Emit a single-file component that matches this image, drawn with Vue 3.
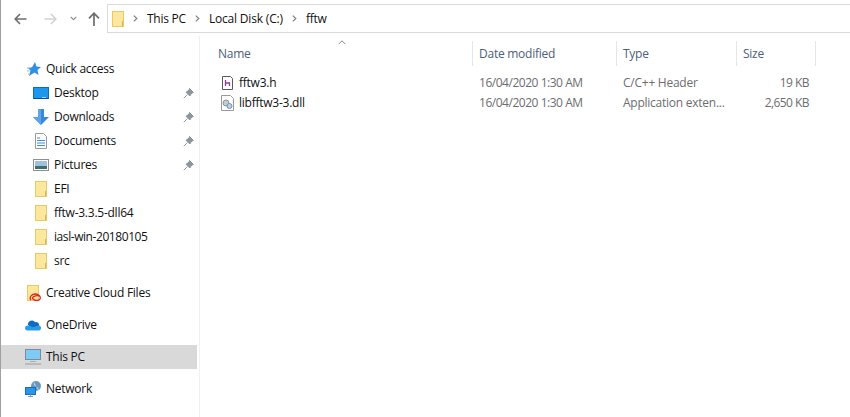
<script setup>
const folders = [
  { name: 'EFI' },
  { name: 'fftw-3.3.5-dll64' },
  { name: 'iasl-win-20180105', tight: true },
  { name: 'src' }
]
const files = [
  { name: 'fftw3.h', icon: 'h', date: '16/04/2020 1:30 AM', type: 'C/C++ Header', size: '19 KB' },
  { name: 'libfftw3-3.dll', icon: 'dll', date: '16/04/2020 1:30 AM', type: 'Application exten...', size: '2,650 KB' }
]
const quick = [
  { name: 'Desktop', icon: 'desktop' },
  { name: 'Downloads', icon: 'downloads' },
  { name: 'Documents', icon: 'documents' },
  { name: 'Pictures', icon: 'pictures' }
]
</script>

<template>
  <div class="win">
    <header class="toolbar">
      <svg class="nav back" width="13" height="12" viewBox="0 0 13 12"><path d="M6 1 1.200 6 6 11M1.500 6H12.500" fill="none" stroke="#6d6d6d" stroke-width="1.600"/></svg>
      <svg class="nav fwd" width="13" height="12" viewBox="0 0 13 12"><path d="M7 1 11.800 6 7 11M11.500 6H.5" fill="none" stroke="#d2d2d2" stroke-width="1.600"/></svg>
      <svg class="nav chev" width="7" height="5" viewBox="0 0 7 5"><path d="M.7 .8 3.500 3.600 6.300 .8" fill="none" stroke="#8a8a8a" stroke-width="1.200"/></svg>
      <svg class="nav up" width="12" height="14" viewBox="0 0 12 14"><path d="M1 6.400 6 1.200 11 6.400M6 1.600V14" fill="none" stroke="#6d6d6d" stroke-width="1.700"/></svg>
      <div class="address">
        <svg class="addr-folder" width="12" height="16" viewBox="0 0 12 16"><rect x=".5" y=".5" width="11" height="15" fill="#fce79f" stroke="#ecc960"/><path d="M10.500 10v5" stroke="#d9b64f" fill="none"/></svg>
        <svg class="crumb-arrow" width="5" height="7" viewBox="0 0 5 7"><path d="M.8 .6 3.800 3.500 .8 6.400" fill="none" stroke="#808080" stroke-width="1.200"/></svg>
        <span class="crumb">This PC</span>
        <svg class="crumb-arrow" width="5" height="7" viewBox="0 0 5 7"><path d="M.8 .6 3.800 3.500 .8 6.400" fill="none" stroke="#808080" stroke-width="1.200"/></svg>
        <span class="crumb disk">Local Disk (C:)</span>
        <svg class="crumb-arrow" width="5" height="7" viewBox="0 0 5 7"><path d="M.8 .6 3.800 3.500 .8 6.400" fill="none" stroke="#808080" stroke-width="1.200"/></svg>
        <span class="crumb">fftw</span>
      </div>
    </header>

    <div class="body">
      <nav class="sidebar">
        <div class="row top">
          <svg width="16" height="16" viewBox="0 0 16 16"><path d="M10 1 11.500 5.500 16 6 12.500 9 13.500 14 9.500 11.500 4 15 5.500 9.500 3 7 7 6.300Z" fill="#2f8fe0"/><path d="M2 7h3M2 10h2.500M3 13h1.500" stroke="#8cc4ef" fill="none"/></svg>
          <span>Quick access</span>
        </div>
        <div v-for="q in quick" :key="q.name" class="row sub">
          <svg v-if="q.icon === 'desktop'" width="16" height="16" viewBox="0 0 16 16"><rect x=".5" y="2.500" width="15" height="11" fill="#1b97ee" stroke="#0c6cc0"/><path d="M1 13.500h14" stroke="#084d8f"/><path d="M9 12.500h4" stroke="#9fd4f7"/></svg>
          <svg v-else-if="q.icon === 'downloads'" width="16" height="16" viewBox="0 0 16 16"><path d="M5 0h6v8h5L8 16 0 8h5Z" fill="#3a87d8"/><path d="M5 0h3v16L0 8h5Z" fill="#5ba6ea"/></svg>
          <svg v-else-if="q.icon === 'documents'" width="16" height="16" viewBox="0 0 16 16"><path d="M2.500 .5h8l3 3v12h-11Z" fill="#fff" stroke="#9a9a9a"/><path d="M4 5h3M4 7.500h8M4 10h8M4 12.500h8" stroke="#3f8ed8"/></svg>
          <svg v-else width="16" height="16" viewBox="0 0 16 16"><rect x=".5" y="2.500" width="15" height="11" fill="#fff" stroke="#8f8f8f"/><rect x="2" y="4" width="12" height="8" fill="#9fc3df"/><path d="M2 9h12v3H2Z" fill="#3f6f66"/></svg>
          <span class="label">{{ q.name }}</span>
          <svg class="pin" width="11" height="11" viewBox="0 0 11 11"><path d="M6.500 .5 10.500 4.500 8.800 5 6.800 8 3 4.200 6 2.200ZM4.400 6.600.8 10.200" fill="#8f969b" stroke="#8f969b"/></svg>
        </div>
        <div v-for="f in folders" :key="f.name" class="row sub">
          <svg width="16" height="16" viewBox="0 0 16 16"><rect x="2.500" y=".5" width="11" height="15" fill="#fce79f" stroke="#ecc960"/><path d="M12.500 10v5" stroke="#d9b64f" fill="none"/></svg>
          <span class="label" :class="{ tight: f.tight }">{{ f.name }}</span>
        </div>
        <div class="row top gap">
          <svg width="16" height="16" viewBox="0 0 16 16"><rect x="2.500" y=".5" width="11" height="15" fill="#fce79f" stroke="#ecc960"/><path d="M6 15c-2-2 0-6 4-6s6 3 5 5-5 2-7 0 3-4 6-3" fill="none" stroke="#e0241c" stroke-width="1.300"/></svg>
          <span>Creative Cloud Files</span>
        </div>
        <div class="row top gap">
          <svg width="16" height="16" viewBox="0 0 16 16"><path d="M3 8a4 4 0 0 1 7.200-2.800 3.200 3.200 0 0 1 4 3.300L8 11.500Z" fill="#0f6cc4"/><path d="M0 11.200C0 9.500 1.400 8.200 3.200 8.400L8 10.200l6-1.600c1.200.2 2 1.200 2 2.400 0 1.400-.8 2.500-2 2.500H2.200C1 13.500 0 12.300 0 11.200Z" fill="#2b9be8"/></svg>
          <span>OneDrive</span>
        </div>
        <div class="row top gap selected">
          <svg width="16" height="16" viewBox="0 0 16 16"><rect x=".5" y=".5" width="15" height="10" fill="#7ecbf8" stroke="#7d8b96"/><path d="M5 13h6v-1H5Z" fill="#a7b1b9"/><path d="M0 15h16" stroke="#a7b1b9" stroke-width="1.500"/></svg>
          <span>This PC</span>
        </div>
        <div class="row top gap">
          <svg width="16" height="16" viewBox="0 0 16 16"><circle cx="11" cy="5" r="5" fill="#6b98bd"/><path d="M9 1c-1 3 1 4 3 5s2 3 1 3" fill="#bcd6ea"/><rect x=".5" y="6.500" width="10" height="7" fill="#2a96ea" stroke="#1a6fb5"/><path d="M3 15.500h5M5.500 13.500v2" stroke="#8c9ba7"/></svg>
          <span>Network</span>
        </div>
      </nav>

      <main class="content">
        <svg class="sort" width="8" height="5" viewBox="0 0 8 5"><path d="M.5 4.300 4 .8 7.500 4.300" fill="none" stroke="#8a8a8a"/></svg>
        <div class="thead">
          <div class="th name">Name</div>
          <div class="th sep">Date modified</div>
          <div class="th sep">Type</div>
          <div class="th sep lastsep">Size</div>
        </div>
        <div class="tbody">
          <div v-for="f in files" :key="f.name" class="tr">
            <div class="td name">
              <svg v-if="f.icon === 'h'" width="16" height="16" viewBox="0 0 16 16"><path d="M2.500 1.500h8l2 2v11h-10Z" fill="#fff" stroke="#5a5a5a"/><path d="M5.500 5v6M5.500 8h4v3" fill="none" stroke="#8e3d96" stroke-width="1.300"/></svg>
              <svg v-else width="16" height="16" viewBox="0 0 16 16"><path d="M1.500 .5h9l3 3v12h-12Z" fill="#fff" stroke="#9a9a9a"/><circle cx="6" cy="8" r="3" fill="#c3ccd3" stroke="#8795a0"/><circle cx="9.500" cy="11" r="2.500" fill="#b4d3ea" stroke="#7b93a8"/></svg>
              <span>{{ f.name }}</span>
            </div>
            <div class="td muted date">{{ f.date }}</div>
            <div class="td muted">{{ f.type }}</div>
            <div class="td muted right">{{ f.size }}</div>
          </div>
        </div>
      </main>
    </div>
  </div>
</template>

<style>
html, body { margin: 0; background: #fff; overflow: hidden; }
</style>

<style scoped>
.win {
  width: 850px;
  height: 417px;
  overflow: hidden;
  box-sizing: border-box;
  border-left: 1px solid #a0a0a0;
  background: #fff;
  font: 12px/16px "Open Sans", "Noto Sans", sans-serif;
  letter-spacing: -0.25px;
  color: #111;
  display: flex;
  flex-direction: column;
}
.toolbar {
  height: 36px;
  flex: none;
  display: flex;
  align-items: center;
  box-sizing: border-box;
  padding: 4px 0 3px;
}
.nav { flex: none; margin-top: 1px; }
.back { margin-left: 13px; }
.fwd { margin-left: 17px; }
.chev { margin-left: 13px; margin-top: 0; }
.up { margin-left: 11px; }
.address {
  margin-left: 7px;
  width: 760px;
  height: 29px;
  flex: none;
  box-sizing: border-box;
  border: 1px solid #d9d9d9;
  display: flex;
  align-items: center;
  padding-left: 4px;
}
.addr-folder { flex: none; }
.crumb-arrow { flex: none; margin: 0 9px; }
.disk { letter-spacing: -0.18px; }
.body { flex: 1; display: flex; min-height: 0; }
.sidebar {
  width: 199px;
  flex: none;
  box-sizing: border-box;
  padding-top: 21px;
  padding-right: 2px;
  border-right: 1px solid #f0f0f0;
}
.row {
  height: 24px;
  display: flex;
  align-items: center;
}
.row svg { flex: none; }
.row span { white-space: nowrap; }
.top { padding-left: 24px; }
.top span { margin-left: 5px; }
.sub { padding-left: 32px; position: relative; }
.sub .label { margin-left: 5px; }
.sub .tight { letter-spacing: -0.43px; }
.gap { margin-top: 8px; }
.selected { background: #d9d9d9; }
.pin { position: absolute; left: 182px; top: 7px; }
.content { flex: 1; position: relative; min-width: 0; }
.sort { position: absolute; left: 138px; top: 4px; }
.thead {
  display: grid;
  grid-template-columns: 272px 144px 120px 80px;
  margin-top: 5px;
  height: 25px;
}
.th {
  display: flex;
  align-items: center;
  padding-left: 6px;
  color: #4c607a;
  height: 25px;
}
.th.name { padding-left: 18px; }
.th.sep { border-left: 1px solid #e5e5e5; }
.th.lastsep { border-right: 1px solid #e5e5e5; }
.tbody { margin-top: 7px; }
.tr {
  display: grid;
  grid-template-columns: 272px 144px 120px 73px;
  height: 20px;
  align-items: center;
}
.td { padding-left: 7px; white-space: nowrap; }
.td.name { padding-left: 20px; display: flex; align-items: center; gap: 3px; }
.td.name svg { flex: none; }
.muted { color: #6d6d6d; }
.date { letter-spacing: -0.47px; }
.right { text-align: right; padding-left: 0; letter-spacing: -0.55px; }
</style>
